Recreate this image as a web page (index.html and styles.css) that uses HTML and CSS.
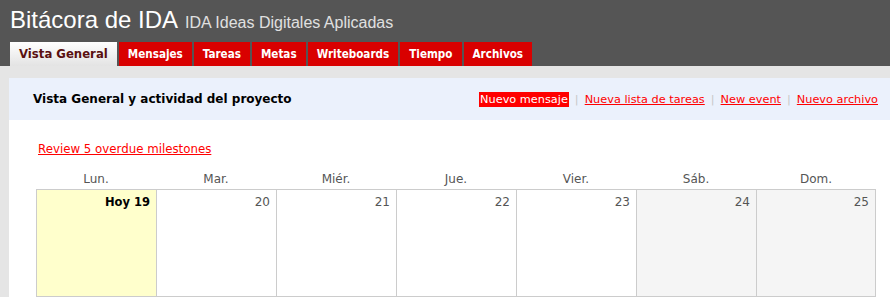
FILE: index.html
```html
<!DOCTYPE html>
<html lang="es">
<head>
<meta charset="utf-8">
<title>Bitácora de IDA</title>
<link rel="stylesheet" href="styles.css">
</head>
<body>
<header class="top">
  <div class="brand">
    <span class="brand-title">Bitácora de IDA</span>
    <span class="brand-sub">IDA Ideas Digitales Aplicadas</span>
  </div>
  <nav class="tabs">
    <a class="tab tab-active" href="#">Vista General</a>
    <a class="tab" href="#">Mensajes</a>
    <a class="tab" href="#">Tareas</a>
    <a class="tab" href="#">Metas</a>
    <a class="tab" href="#">Writeboards</a>
    <a class="tab" href="#">Tiempo</a>
    <a class="tab" href="#">Archivos</a>
  </nav>
</header>
<main class="page">
  <section class="panel">
    <div class="panel-head">
      <h1 class="panel-title">Vista General y actividad del proyecto</h1>
      <div class="actions">
        <a class="action action-primary" href="#">Nuevo mensaje</a>
        <span class="sep">|</span>
        <a class="action" href="#">Nueva lista de tareas</a>
        <span class="sep">|</span>
        <a class="action" href="#">New event</a>
        <span class="sep">|</span>
        <a class="action" href="#">Nuevo archivo</a>
      </div>
    </div>
    <div class="panel-body">
      <a class="overdue" href="#">Review 5 overdue milestones</a>
      <div class="calendar">
        <div class="dow">Lun.</div>
        <div class="dow">Mar.</div>
        <div class="dow">Miér.</div>
        <div class="dow">Jue.</div>
        <div class="dow">Vier.</div>
        <div class="dow">Sáb.</div>
        <div class="dow">Dom.</div>
        <div class="day today"><span class="num">Hoy 19</span></div>
        <div class="day"><span class="num">20</span></div>
        <div class="day"><span class="num">21</span></div>
        <div class="day"><span class="num">22</span></div>
        <div class="day"><span class="num">23</span></div>
        <div class="day weekend"><span class="num">24</span></div>
        <div class="day weekend"><span class="num">25</span></div>
      </div>
    </div>
  </section>
</main>
</body>
</html>
```
FILE: styles.css
```css
html, body {
  margin: 0;
  padding: 0;
}
body {
  background: #e5e5e5;
  font-family: "DejaVu Sans", Verdana, sans-serif;
  font-size: 12px;
  color: #000;
}
a { text-decoration: none; }

.top {
  background: #555555;
  height: 66px;
  display: flex;
  flex-direction: column;
  justify-content: space-between;
}
.brand {
  padding: 6px 0 0 10px;
  display: flex;
  align-items: baseline;
  gap: 7px;
  font-family: "Liberation Sans", Arial, sans-serif;
  white-space: nowrap;
}
.brand-title {
  color: #fff;
  font-size: 24px;
}
.brand-sub {
  color: #e0e0e0;
  font-size: 16px;
}
.tabs {
  display: flex;
  gap: 2px;
  padding-left: 10px;
  height: 24px;
}
.tab {
  display: flex;
  align-items: center;
  padding: 0 9px;
  background: #d90000;
  color: #fff;
  font-family: "DejaVu Sans Condensed", "DejaVu Sans", sans-serif;
  font-weight: bold;
  font-size: 11.6px;
  white-space: nowrap;
}
.tab-active {
  background: linear-gradient(#ffffff, #e3e3e3);
  color: #5a1010;
  font-family: "DejaVu Sans", Verdana, sans-serif;
  font-size: 11.7px;
}

.page {
  padding: 12px 0 0 9px;
}
.panel {
  background: #fff;
}
.panel-head {
  background: #ebf1fc;
  height: 42px;
  display: flex;
  align-items: center;
  justify-content: space-between;
  padding: 0 12px 0 24px;
}
.panel-title {
  margin: 0;
  font-size: 12px;
  font-weight: bold;
  color: #000;
}
.actions {
  display: flex;
  align-items: center;
  gap: 6px;
  white-space: nowrap;
  font-size: 11.3px;
}
.action {
  color: #ff0000;
  text-decoration: underline;
}
.action-primary {
  background: #ff0000;
  color: #fff;
  text-decoration: none;
  padding: 1px 1px;
}
.sep {
  color: #c8c8c8;
}

.panel-body {
  padding: 22px 0 0 27px;
}
.overdue {
  display: inline-block;
  color: #ff0000;
  text-decoration: underline;
  margin-left: 2px;
  font-size: 11.8px;
}
.calendar {
  margin-top: 16px;
  display: grid;
  grid-template-columns: repeat(7, 120px);
  width: 841px;
}
.dow {
  text-align: center;
  color: #555;
  padding-bottom: 3px;
}
.day {
  height: 101px;
  border-top: 1px solid #cccccc;
  border-bottom: 1px solid #cccccc;
  border-left: 1px solid #cccccc;
  text-align: right;
  padding: 5px 6px 0 0;
  color: #555;
}
.day:last-child {
  border-right: 1px solid #cccccc;
}
.today {
  background: #ffffcc;
}
.today .num {
  color: #000;
  font-weight: bold;
  font-size: 11.5px;
}
.weekend {
  background: #f5f5f5;
}
```
